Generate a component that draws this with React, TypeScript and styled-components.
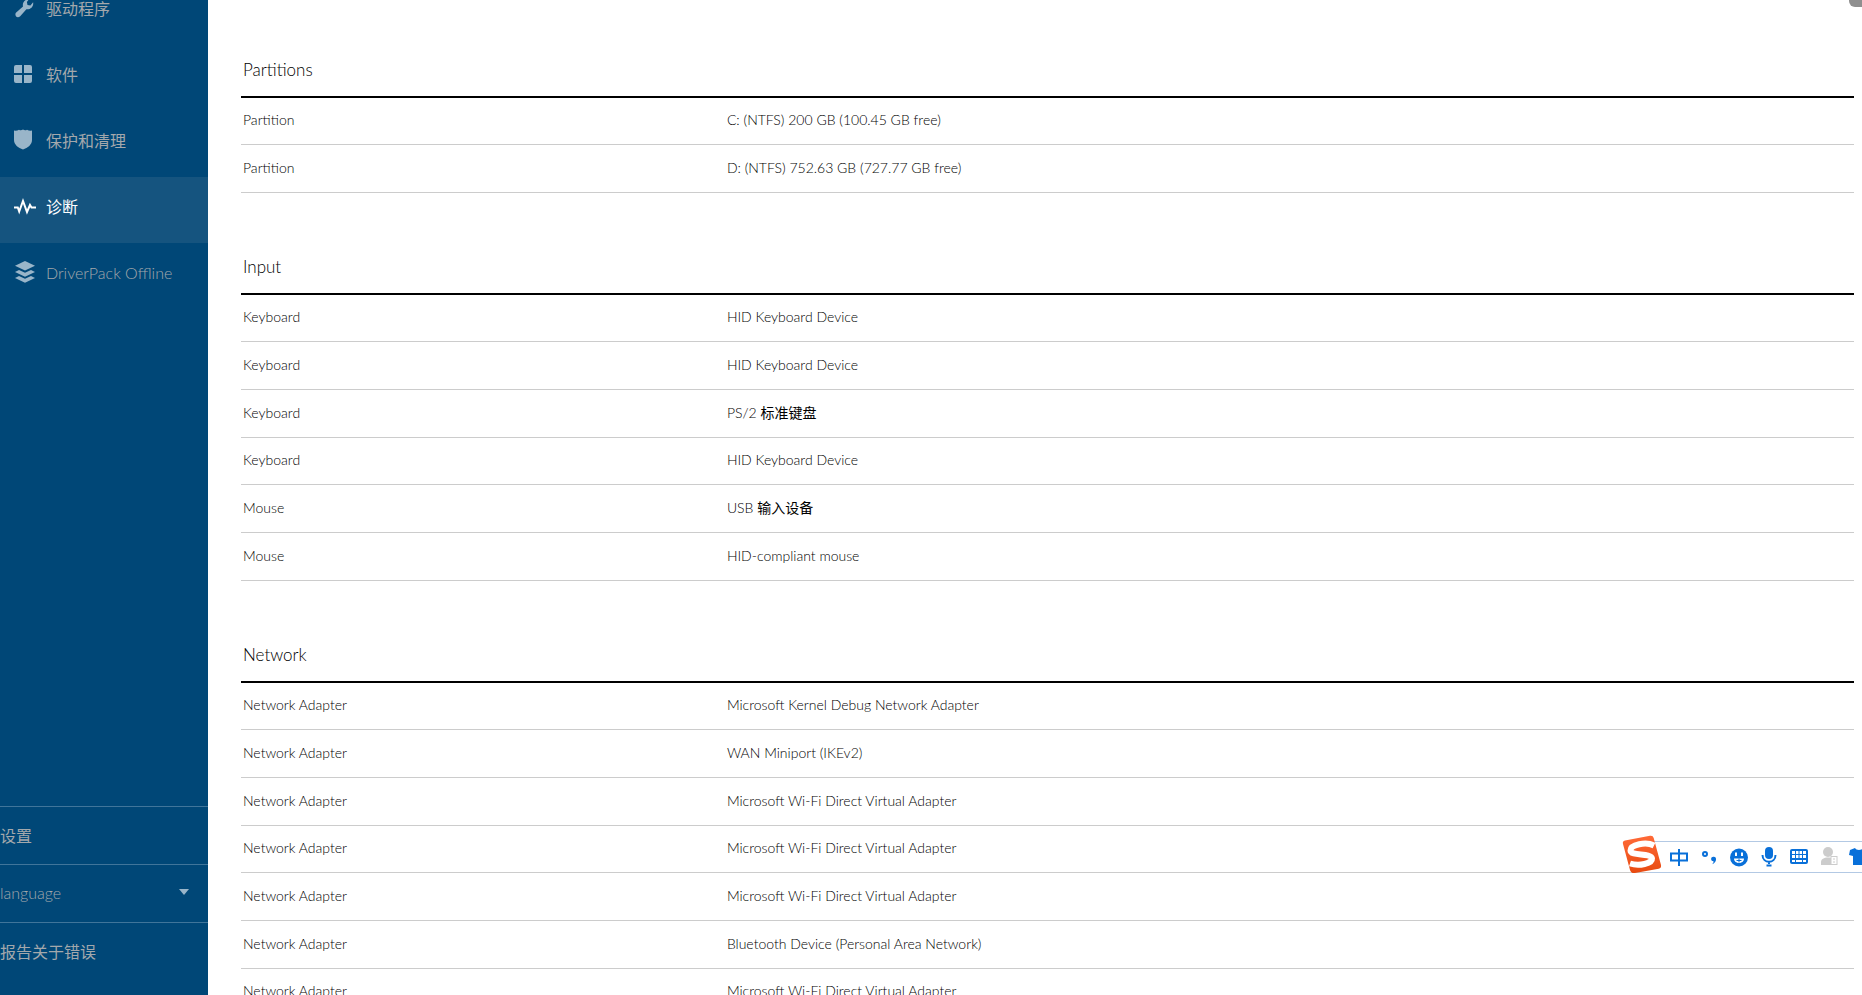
import React from "react";
import styled, { createGlobalStyle } from "styled-components";

const GlobalStyle = createGlobalStyle`
  *, *::before, *::after { box-sizing: border-box; }
  html, body { margin: 0; background: #fff; overflow: hidden; }
  body, button, select {
    font-family: Lato, "Noto Sans CJK SC", sans-serif;
    font-weight: 300;
  }
`;

const Page = styled.div`
  display: flex;
  height: 100vh;
  overflow: hidden;
  color: #000;
`;

const Sidebar = styled.aside`
  display: flex;
  flex-direction: column;
  justify-content: space-between;
  flex: 0 0 208px;
  height: 100vh;
  overflow: hidden;
  background: #004777;
`;

const Nav = styled.nav`
  display: flex;
  flex-direction: column;
  margin-top: -21px;
`;

const NavItem = styled.a<{ $active?: boolean }>`
  display: flex;
  align-items: center;
  height: 66px;
  padding: 0 14px 6px;
  font-size: 16px;
  line-height: 24px;
  text-decoration: none;
  color: ${(p) => (p.$active ? "#fff" : "#a3a8ac")};
  background: ${(p) => (p.$active ? "#15547f" : "transparent")};
`;

const NavIcon = styled.svg<{ $active?: boolean }>`
  flex: 0 0 22px;
  width: 22px;
  height: 22px;
  margin: 0 10px 2px 0;
  fill: ${(p) => (p.$active ? "#fff" : "#99b5c9")};
`;

const SidebarFooter = styled.div`
  display: flex;
  flex-direction: column;
  height: 189px;
`;

const FooterRow = styled.div`
  display: flex;
  align-items: center;
  position: relative;
  flex: 0 0 58px;
  border-top: 1px solid #40759a;
`;

const FooterButton = styled.button`
  flex: 1;
  padding: 0;
  border: 0;
  background: none;
  color: #a3a8ac;
  font-size: 16px;
  line-height: 24px;
  text-align: left;
`;

const LanguageSelect = styled.select`
  flex: 1;
  padding: 0 0 2px;
  border: 0;
  appearance: none;
  background: none;
  color: #a3a8ac;
  font-size: 16px;
  line-height: 24px;
`;

const Caret = styled.svg`
  position: absolute;
  right: 19px;
  top: 24px;
  width: 10px;
  height: 6px;
  fill: #99b5c9;
  pointer-events: none;
`;

const Content = styled.main`
  flex: 1;
  min-width: 0;
  padding: 0 8px 0 33px;
`;

const Heading = styled.h2`
  display: flex;
  align-items: flex-end;
  height: 100px;
  margin: 0;
  padding: 0 2px 14px;
  font-size: 17px;
  font-weight: 300;
  line-height: 24px;
`;

const Section = styled.section`
  &:first-child ${Heading} {
    height: 96px;
  }
`;

const Table = styled.table`
  width: 100%;
  border-collapse: separate;
  border-spacing: 0;
  border-top: 2px solid #000;
  table-layout: fixed;
`;

const Row = styled.tr`
  height: 48px;

  &:nth-child(3n + 1) {
    height: 47px;
  }
`;

const Cell = styled.td<{ $width?: string }>`
  width: ${(p) => p.$width ?? "auto"};
  padding: 0 2px 2px;
  border-bottom: 1px solid #ccc;
  font-size: 14px;
  line-height: 20px;
  white-space: nowrap;
`;

const Han = styled.span`
  font-weight: 400;
`;

const ScrollTop = styled.div`
  position: fixed;
  top: 0;
  right: 0;
  width: 13px;
  height: 7px;
  border-bottom-left-radius: 6px;
  background: #8f8f8f;
`;

const ImeBar = styled.div`
  position: fixed;
  right: 0;
  bottom: 122px;
  display: flex;
  align-items: center;
  width: 212px;
  height: 32px;
  padding-left: 14px;
  border: solid #b3c9e4;
  border-width: 1px 0;
  background: #fff;
`;

const ImeLogo = styled.svg`
  position: absolute;
  left: -29px;
  top: -8px;
  width: 42px;
  height: 42px;
`;

const ImeButton = styled.button`
  display: flex;
  justify-content: center;
  flex: 0 0 30px;
  height: 24px;
  padding: 0;
  border: 0;
  background: none;

  svg {
    flex: none;
    width: 24px;
    height: 24px;
  }
`;

type Entry = [string, string];

const sections: { title: string; rows: Entry[] }[] = [
  {
    title: "Partitions",
    rows: [
      ["Partition", "C: (NTFS) 200 GB (100.45 GB free)"],
      ["Partition", "D: (NTFS) 752.63 GB (727.77 GB free)"],
    ],
  },
  {
    title: "Input",
    rows: [
      ["Keyboard", "HID Keyboard Device"],
      ["Keyboard", "HID Keyboard Device"],
      ["Keyboard", "PS/2 标准键盘"],
      ["Keyboard", "HID Keyboard Device"],
      ["Mouse", "USB 输入设备"],
      ["Mouse", "HID-compliant mouse"],
    ],
  },
  {
    title: "Network",
    rows: [
      ["Network Adapter", "Microsoft Kernel Debug Network Adapter"],
      ["Network Adapter", "WAN Miniport (IKEv2)"],
      ["Network Adapter", "Microsoft Wi-Fi Direct Virtual Adapter"],
      ["Network Adapter", "Microsoft Wi-Fi Direct Virtual Adapter"],
      ["Network Adapter", "Microsoft Wi-Fi Direct Virtual Adapter"],
      ["Network Adapter", "Bluetooth Device (Personal Area Network)"],
      ["Network Adapter", "Microsoft Wi-Fi Direct Virtual Adapter"],
    ],
  },
];

const navItems = [
  {
    label: "驱动程序",
    icon: (
      <path d="M1.900 15.800 9 9.600C8.200 6.200 10.200 2.200 15 2.200L12.900 5l.6 2.900 2.900.5 2.700-3.100c.8 4.200-2.600 7.600-6.700 7l-6.200 7C3.100 21.800.2 18.600 1.900 15.800Z" />
    ),
  },
  {
    label: "软件",
    icon: (
      <path d="M2 2h6v8H0V4a2 2 0 0 1 2-2Zm8 0h6a2 2 0 0 1 2 2v6h-8ZM0 12h8v8H2a2 2 0 0 1-2-2Zm10 0h8v6a2 2 0 0 1-2 2h-6Z" />
    ),
  },
  {
    label: "保护和清理",
    icon: (
      <path d="M0 1.500Q2.800 2 5 .7 7 2 9 .5 11 2 13 .7 15.200 2 18 1.500V11c0 4.500-4.200 8-9 9.500C4.200 19 0 15.500 0 11Z" />
    ),
  },
  {
    label: "诊断",
    active: true,
    icon: (
      <path
        d="M0 12.500h3.800l1.400 4L9 6l4 11 3-7 1.500 2.500H22"
        fill="none"
        stroke="#fff"
        strokeWidth="2"
      />
    ),
  },
  {
    label: "DriverPack Offline",
    icon: (
      <>
        <path d="m11 0 10 4.800-10 4.800L1 4.800Z" />
        <path d="m1 11 4-2 6 2.800L17 9l4 2-10 4.800Z" />
        <path d="m1 17 4-2 6 2.800 6-2.800 4 2-10 4.800Z" />
      </>
    ),
  },
];

const imeTools = [
  {
    label: "中文",
    icon: (
      <path d="M4 8.500h16v7H4ZM12 4v17" fill="none" stroke="#0970d9" strokeWidth="2" />
    ),
  },
  {
    label: "标点",
    icon: (
      <>
        <circle cx="8" cy="9" r="2" fill="none" stroke="#0970d9" strokeWidth="2" />
        <path d="M14 14a2.500 2.500 0 1 1 5 .5c0 2-1.500 4-4 4.700 1.200-1 1.600-1.700 1.500-3a2.500 2.500 0 0 1-2.500-2.200Z" fill="#0970d9" />
      </>
    ),
  },
  {
    label: "表情",
    icon: (
      <>
        <circle cx="12" cy="12.500" r="9" fill="#0970d9" />
        <path d="M7 13.500h10c0 6-10 6-10 0Z" fill="#fff" />
        <path d="M9 7.500v3.500M15 7.500v3.500" stroke="#fff" strokeWidth="2" />
        <path d="M9.500 15.500h5M12 13.500v4" stroke="#0970d9" />
      </>
    ),
  },
  {
    label: "语音",
    icon: (
      <>
        <rect x="8" y="2" width="8" height="12" rx="4" fill="#0970d9" />
        <path d="M5.500 10c0 9 13 9 13 0M12 16v3M9.500 20.500h5" fill="none" stroke="#0970d9" strokeWidth="2" />
      </>
    ),
  },
  {
    label: "软键盘",
    icon: (
      <>
        <rect x="3" y="4" width="18" height="15" rx="2" fill="#0970d9" />
        <path d="M5 7.500h14M5 11.500h14" stroke="#fff" strokeWidth="3" />
        <path d="M5 16h3M9 16h6M16 16h3" stroke="#fff" strokeWidth="2" />
        <path d="M8.500 5v8M12 5v8M15.500 5v8" stroke="#0970d9" />
      </>
    ),
  },
  {
    label: "用户",
    icon: (
      <>
        <circle cx="11" cy="7" r="5" fill="#ccc" />
        <path d="M4 20v-3c0-3 3-4.500 7-4.500s6 1 6 4.500v3Z" fill="#ccc" />
        <rect x="14" y="11.500" width="6" height="8" fill="#fff" stroke="#ccc" />
        <path d="M16 14h2M16 17h2" stroke="#ccc" />
      </>
    ),
  },
  {
    label: "皮肤",
    icon: (
      <path d="M3 5l5-2c1 2.500 7 2.500 8 0l5 2 2 5-4 1v9H6v-9l-4-1Z" fill="#0970d9" />
    ),
  },
];

/* Chinese runs are set a weight heavier than the Latin text beside them. */
function MixedText({ text }: { text: string }) {
  return (
    <span>
      {text
        .split(/([\u4e00-\u9fff]+)/)
        .filter(Boolean)
        .map((part, i) => (/[\u4e00-\u9fff]/.test(part) ? <Han key={i}>{part}</Han> : part))}
    </span>
  );
}

function DataSection({ title, rows }: { title: string; rows: Entry[] }) {
  return (
    <Section aria-label={title}>
      <Heading>{title}</Heading>
      <Table>
        <tbody>
          {rows.map(([name, value], i) => (
            <Row key={i}>
              <Cell $width="30%">{name}</Cell>
              <Cell>
                <MixedText text={value} />
              </Cell>
            </Row>
          ))}
        </tbody>
      </Table>
    </Section>
  );
}

export default function App() {
  return (
    <>
      <GlobalStyle />
      <Page>
        <Sidebar>
          <Nav>
            {navItems.map((item) => (
              <NavItem key={item.label} href="#" $active={item.active}>
                <NavIcon viewBox="0 0 22 22" $active={item.active} aria-hidden="true">
                  {item.icon}
                </NavIcon>
                <MixedText text={item.label} />
              </NavItem>
            ))}
          </Nav>
          <SidebarFooter>
            <FooterRow>
              <FooterButton>
                <MixedText text="设置" />
              </FooterButton>
            </FooterRow>
            <FooterRow>
              <LanguageSelect aria-label="language">
                <option>language</option>
              </LanguageSelect>
              <Caret viewBox="0 0 10 6" aria-hidden="true">
                <path d="M0 0h10L5 6Z" />
              </Caret>
            </FooterRow>
            <FooterRow>
              <FooterButton>
                <MixedText text="报告关于错误" />
              </FooterButton>
            </FooterRow>
          </SidebarFooter>
        </Sidebar>
        <Content>
          {sections.map((s) => (
            <DataSection key={s.title} {...s} />
          ))}
        </Content>
      </Page>
      <ScrollTop />
      <ImeBar>
        <ImeLogo viewBox="0 0 42 42" aria-hidden="true">
          <defs>
            <linearGradient id="ime" x1="0" y1="0" x2="0" y2="1">
              <stop offset="0" stopColor="#ff6a38" />
              <stop offset="1" stopColor="#e84a10" />
            </linearGradient>
          </defs>
          <path d="M4 6.500 29 1.800q3-.5 3.700 2.200L40 31q.6 3-2.300 3.700L14 39q-4 .7-5-3L2 10q-.8-3 2-3.500Z" fill="url(#ime)" />
          <path d="M33 11.500C25 7.500 9.500 10.500 9.500 16.500c0 6 20.500 2 21.500 8 .4 5-13 8-22 5" fill="none" stroke="#fff" strokeWidth="6" />
        </ImeLogo>
        {imeTools.map((t) => (
          <ImeButton key={t.label} aria-label={t.label}>
            <svg viewBox="0 0 24 24" aria-hidden="true">
              {t.icon}
            </svg>
          </ImeButton>
        ))}
      </ImeBar>
    </>
  );
}
